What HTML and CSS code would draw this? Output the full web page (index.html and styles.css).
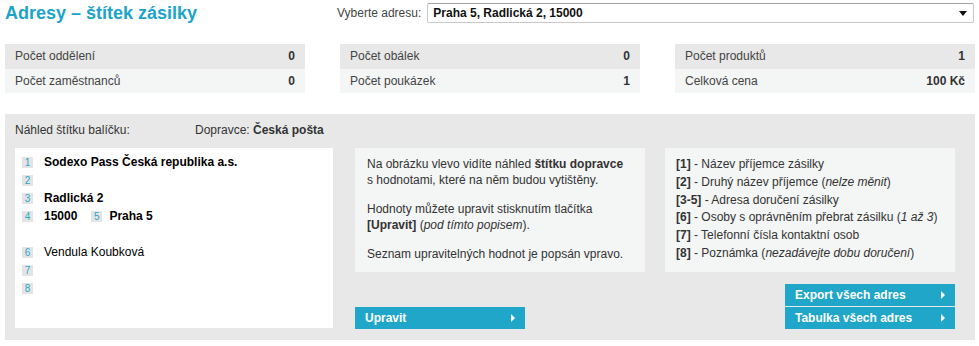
FILE: index.html
```html
<!DOCTYPE html>
<html lang="cs">
<head>
    <meta charset="UTF-8">
    <title>Adresy – štítek zásilky</title>
    <link rel="stylesheet" href="styles.css">
</head>
<body>
    <div class="header">
        <h1 class="title">Adresy – štítek zásilky</h1>
        <label class="select-label">Vyberte adresu:</label>
        <div class="select">
            <span>Praha 5, Radlická 2, 15000</span>
            <span class="select-arrow"></span>
        </div>
    </div>

    <div class="stats">
        <div class="stat-box">
            <div class="stat-row"><span>Počet oddělení</span><b>0</b></div>
            <div class="stat-row"><span>Počet zaměstnanců</span><b>0</b></div>
        </div>
        <div class="stat-box">
            <div class="stat-row"><span>Počet obálek</span><b>0</b></div>
            <div class="stat-row"><span>Počet poukázek</span><b>1</b></div>
        </div>
        <div class="stat-box">
            <div class="stat-row"><span>Počet produktů</span><b>1</b></div>
            <div class="stat-row"><span>Celková cena</span><b>100 Kč</b></div>
        </div>
    </div>

    <div class="panel">
        <div class="panel-head">
            <span class="preview-title">Náhled štítku balíčku:</span>
            <span>Dopravce: <b>Česká pošta</b></span>
        </div>
        <div class="panel-body">
            <div class="label-box">
                <div class="line bold"><span class="num">1</span>Sodexo Pass Česká republika a.s.</div>
                <div class="line"><span class="num">2</span></div>
                <div class="line bold"><span class="num">3</span>Radlická 2</div>
                <div class="line bold"><span class="num">4</span>15000<span class="num num-inline">5</span>Praha 5</div>
                <div class="line"></div>
                <div class="line"><span class="num">6</span>Vendula Koubková</div>
                <div class="line"><span class="num">7</span></div>
                <div class="line"><span class="num">8</span></div>
            </div>

            <div class="column">
                <div class="info">
                    <p>Na obrázku vlevo vidíte náhled <b>štítku dopravce</b><br>s hodnotami, které na něm budou vytištěny.</p>
                    <p>Hodnoty můžete upravit stisknutím tlačítka<br><b>[Upravit]</b> (<i>pod tímto popisem</i>).</p>
                    <p>Seznam upravitelných hodnot je popsán vpravo.</p>
                </div>
                <div class="buttons">
                    <a class="btn">Upravit<span class="arrow"></span></a>
                </div>
            </div>

            <div class="column column-right">
                <div class="info legend">
                    <div><b>[1]</b> - Název příjemce zásilky</div>
                    <div><b>[2]</b> - Druhý název příjemce (<i>nelze měnit</i>)</div>
                    <div><b>[3-5]</b> - Adresa doručení zásilky</div>
                    <div><b>[6]</b> - Osoby s oprávněním přebrat zásilku (<i>1 až 3</i>)</div>
                    <div><b>[7]</b> - Telefonní čísla kontaktní osob</div>
                    <div><b>[8]</b> - Poznámka (<i>nezadávejte dobu doručení</i>)</div>
                </div>
                <div class="buttons">
                    <a class="btn">Export všech adres<span class="arrow"></span></a>
                    <a class="btn">Tabulka všech adres<span class="arrow"></span></a>
                </div>
            </div>
        </div>
    </div>
</body>
</html>
```

FILE: styles.css
```css
body {
    margin: 0;
    padding: 0 5px;
    font-family: "Liberation Sans", Arial, sans-serif;
    font-size: 12px;
    color: #333;
    background-color: white;
    width: 970px;
}

.header {
    display: flex;
    align-items: center;
    height: 26px;
}

.title {
    margin: 0;
    width: 332px;
    font-size: 18px;
    line-height: 22px;
    color: #1ca3c8;
    font-weight: bold;
}

.select-label {
    color: #444;
    margin-right: 6px;
}

.select {
    flex: 1;
    display: flex;
    justify-content: space-between;
    align-items: center;
    height: 18px;
    padding: 0 6px 0 5px;
    border: 1px solid #c8c8c8;
    border-top-color: #a0a0a0;
    border-radius: 2px;
    font-weight: bold;
    color: #111;
    margin-right: 1px;
}

.select-arrow {
    width: 0;
    height: 0;
    border-left: 4px solid transparent;
    border-right: 4px solid transparent;
    border-top: 5px solid #111;
    margin-top: 1px;
}

.stats {
    display: flex;
    justify-content: space-between;
    margin-top: 18px;
}

.stat-box {
    width: 300px;
}

.stat-row {
    display: flex;
    justify-content: space-between;
    height: 25px;
    line-height: 25px;
    padding: 0 10px;
    color: #444;
    background-color: #e8e8e8;
}

.stat-row:last-child {
    height: 24px;
    line-height: 24px;
    background-color: #f4f5f5;
}

.stat-row b {
    color: #333;
}

.panel {
    margin-top: 21px;
    background-color: #e8e8e8;
    padding: 0 20px 12px 10px;
}

.panel-head {
    display: flex;
    align-items: center;
    height: 34px;
    padding-bottom: 2px;
    box-sizing: border-box;
    color: #333;
}

.preview-title {
    width: 180px;
}

.panel-body {
    display: flex;
}

.label-box {
    width: 311px;
    height: 175px;
    padding: 5px 0 0 7px;
    background-color: white;
    color: #000;
}

.line {
    display: flex;
    align-items: center;
    height: 18px;
}

.bold {
    font-weight: bold;
}

.num {
    display: inline-block;
    width: 11px;
    height: 11px;
    line-height: 11px;
    margin-right: 11px;
    background-color: #e4e4e4;
    color: #2aa6cc;
    font-size: 10px;
    font-weight: normal;
    text-align: center;
}

.num-inline {
    margin-left: 14px;
    margin-right: 7px;
}

.column {
    display: flex;
    flex-direction: column;
    justify-content: space-between;
    width: 290px;
    margin-left: 22px;
}

.column-right {
    margin-left: 20px;
}

.info {
    height: 124px;
    box-sizing: border-box;
    padding: 8px 10px 0 12px;
    background-color: #f4f5f5;
    line-height: 16px;
}

.info p {
    margin: 0 0 13px;
}

.legend {
    padding: 8px 8px 0 11px;
    line-height: 17.8px;
}

.buttons {
    display: flex;
    flex-direction: column;
    gap: 1px;
    margin-bottom: -1px;
}

.btn {
    display: flex;
    justify-content: space-between;
    align-items: center;
    width: 170px;
    height: 22px;
    box-sizing: border-box;
    padding: 0 10px;
    background-color: #1fa6c9;
    color: white;
    font-weight: bold;
}

.column-right .buttons {
    align-items: flex-end;
}

.arrow {
    width: 0;
    height: 0;
    border-top: 4px solid transparent;
    border-bottom: 4px solid transparent;
    border-left: 4px solid white;
}
```
